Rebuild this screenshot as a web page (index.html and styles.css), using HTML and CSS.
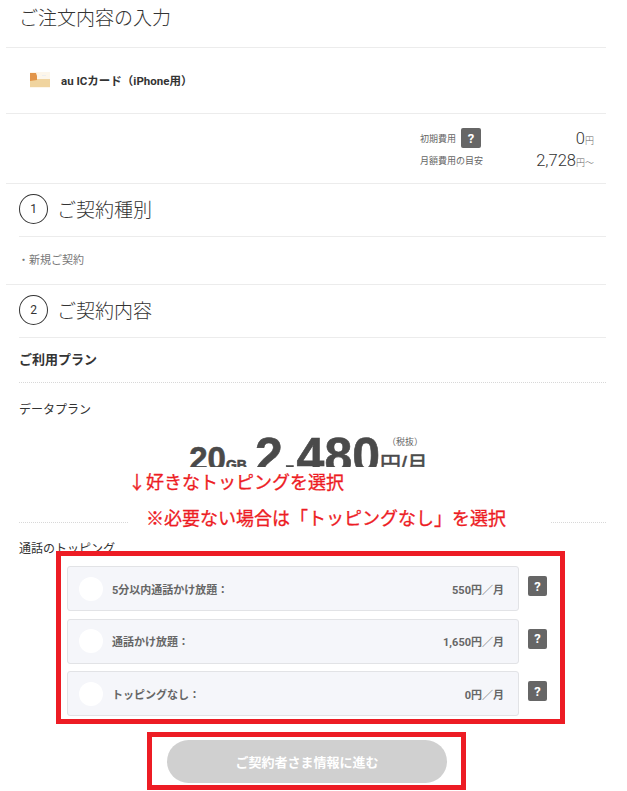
FILE: index.html
```html
<!DOCTYPE html>
<html lang="ja">
<head>
  <meta charset="UTF-8">
  <meta name="viewport" content="width=device-width, initial-scale=1.0">
  <title>ご注文内容の入力</title>
  <link rel="stylesheet" href="styles.css">
</head>
<body>
  <div class="page">
    <h1 class="page-title">ご注文内容の入力</h1>

    <div class="product">
      <svg class="product-icon" width="20" height="16" viewBox="0 0 20 16">
        <rect x="0" y="0" width="20" height="16" fill="#fdf6ea"/>
        <rect x="0" y="7" width="20" height="8" fill="#f0d49f"/>
        <path d="M0 1h6l1 3v4l-7 1z" fill="#e2954a"/>
        <rect x="12" y="3" width="4" height="1" fill="#eeeeee"/>
      </svg>
      <span class="product-name">au ICカード（iPhone用）</span>
    </div>

    <div class="fees">
      <div class="fee-row">
        <span class="fee-label">初期費用</span>
        <span class="help help-fee">?</span>
        <span class="fee-price">0<small>円</small></span>
      </div>
      <div class="fee-row">
        <span class="fee-label">月額費用の目安</span>
        <span class="fee-price">2,728<small>円～</small></span>
      </div>
    </div>

    <div class="step">
      <span class="step-num">1</span>
      <h2 class="step-title">ご契約種別</h2>
    </div>
    <p class="contract-type">・新規ご契約</p>

    <div class="step step-second">
      <span class="step-num">2</span>
      <h2 class="step-title">ご契約内容</h2>
    </div>
    <h3 class="plan-head">ご利用プラン</h3>

    <div class="data-plan">
      <p class="field-label">データプラン</p>
      <div class="plan-price">
        <span class="plan-gb">20<small>GB</small></span>
        <span class="plan-yen">2,480</span>
        <span class="plan-unit"><em>（税抜）</em>円/月</span>
      </div>
    </div>

    <div class="topping">
      <p class="field-label">通話のトッピング</p>
      <div class="option-list">
        <div class="option-row">
          <div class="option">
            <span class="radio"></span>
            <span class="option-name">5分以内通話かけ放題：</span>
            <span class="option-price">550円／月</span>
          </div>
          <span class="help">?</span>
        </div>
        <div class="option-row">
          <div class="option">
            <span class="radio"></span>
            <span class="option-name">通話かけ放題：</span>
            <span class="option-price">1,650円／月</span>
          </div>
          <span class="help">?</span>
        </div>
        <div class="option-row">
          <div class="option">
            <span class="radio"></span>
            <span class="option-name">トッピングなし：</span>
            <span class="option-price">0円／月</span>
          </div>
          <span class="help">?</span>
        </div>
      </div>
    </div>

    <div class="next-wrap">
      <button class="next-btn">ご契約者さま情報に進む</button>
    </div>

    <!-- annotations drawn on top of the screenshot -->
    <div class="note">
      <p class="note-first">↓好きなトッピングを選択</p>
      <p class="note-second">※必要ない場合は「トッピングなし」を選択</p>
    </div>
    <div class="red-box red-options"></div>
    <div class="red-box red-button"></div>
  </div>
</body>
</html>
```

FILE: styles.css
```css
* {
  box-sizing: border-box;
}
html, body {
  height: 791px;
  overflow: hidden;
}
body {
  margin: 0;
  background: #fff;
  color: #333;
  font-family: 'Roboto', 'Noto Sans CJK JP', sans-serif;
}
h1, h2, h3, p {
  margin: 0;
  font-weight: normal;
}
.page {
  position: relative;
  width: 600px;
  height: 791px;
  margin-left: 6px;
}
.page-title {
  height: 48px;
  padding: 5px 0 0 13px;
  font-size: 19px;
  line-height: 28px;
  font-weight: 300;
  border-bottom: 1px solid #ececec;
}
.product {
  display: flex;
  align-items: center;
  height: 66px;
  padding: 0 0 2px 24px;
  border-bottom: 1px solid #ececec;
}
.product-icon {
  margin-right: 11px;
  filter: blur(0.4px);
}
.product-name {
  font-size: 11.5px;
  font-weight: 700;
}
.fees {
  display: flex;
  flex-direction: column;
  gap: 2px;
  height: 70px;
  padding: 14px 12px 0 414px;
  border-bottom: 1px solid #ececec;
}
.fee-row {
  display: flex;
  align-items: center;
  height: 20px;
}
.fee-label {
  font-size: 9px;
  color: #666;
}
.fee-price {
  margin-left: auto;
  font-size: 16.5px;
  font-weight: 300;
}
.fee-price small {
  font-size: 9px;
  color: #666;
}
.help {
  display: flex;
  flex: none;
  align-items: center;
  justify-content: center;
  width: 19px;
  height: 20px;
  border-radius: 2px;
  background: #666;
  color: #fff;
  font-size: 13px;
  font-weight: 700;
}
.help-fee {
  width: 20px;
  margin-left: 5px;
}
.step {
  display: flex;
  align-items: center;
  gap: 9px;
  height: 53px;
  margin-left: 13px;
  padding-bottom: 3px;
  border-bottom: 1px solid #ececec;
}
.step-num {
  display: flex;
  align-items: center;
  justify-content: center;
  width: 29px;
  height: 30px;
  border: 1px solid #333;
  border-radius: 50%;
  font-size: 12px;
}
.step-title {
  font-size: 19px;
  font-weight: 300;
}
.contract-type {
  height: 48px;
  padding: 16px 0 0 12px;
  font-size: 11px;
  line-height: 16px;
  color: #777;
  border-bottom: 1px solid #ececec;
}
.plan-head {
  height: 45px;
  margin-left: 13px;
  padding-top: 13px;
  font-size: 13px;
  line-height: 18px;
  font-weight: 700;
  border-bottom: 1px dotted #d8d8d8;
}
.data-plan {
  height: 140px;
  margin-left: 13px;
  padding-top: 18px;
  border-bottom: 1px dotted #d8d8d8;
  overflow: hidden;
}
.field-label {
  font-size: 12px;
  line-height: 18px;
}
.plan-price {
  display: flex;
  align-items: flex-end;
  justify-content: center;
  height: 46px;
  margin-top: 14px;
  padding-right: 8px;
  color: #4a4a4a;
  font-weight: 700;
  font-family: 'Liberation Sans', 'Noto Sans CJK JP', sans-serif;
  -webkit-text-stroke: 0.6px #4a4a4a;
}
.plan-gb {
  font-size: 33px;
  line-height: 28px;
  margin-right: 8px;
}
.plan-gb small {
  font-size: 14px;
}
.plan-yen {
  font-size: 50px;
  line-height: 46px;
}
.plan-unit {
  position: relative;
  font-size: 21px;
  line-height: 30px;
  font-weight: 400;
}
.plan-unit em {
  position: absolute;
  left: 7px;
  top: -13px;
  font-size: 9px;
  line-height: 12px;
  font-style: normal;
  font-weight: 400;
  white-space: nowrap;
  color: #666;
  -webkit-text-stroke: 0;
}
.topping {
  margin-left: 13px;
  padding-top: 17px;
}
.option-list {
  display: flex;
  flex-direction: column;
  gap: 7.5px;
  margin: 8px 0 0 48px;
}
.option-row {
  display: flex;
  align-items: flex-start;
  gap: 9px;
}
.option {
  display: flex;
  align-items: center;
  width: 452px;
  height: 45px;
  padding: 0 14px 0 11px;
  background: #f5f6fa;
  border: 1px solid #e2e3e6;
  border-radius: 3px;
  color: #666;
  font-size: 11px;
  font-weight: 700;
}
.radio {
  width: 24px;
  height: 24px;
  margin-right: 9px;
  border-radius: 50%;
  background: #fff;
}
.option-price {
  margin-left: auto;
}
.option-row .help {
  margin-top: 10px;
}
.next-wrap {
  display: flex;
  justify-content: center;
  margin-top: 24px;
  padding-left: 2px;
}
.next-btn {
  width: 280px;
  height: 43px;
  border: 0;
  border-radius: 22px;
  background: #d0d0d0;
  color: #fff;
  font-family: inherit;
  font-size: 13px;
  font-weight: 700;
}
.note {
  position: absolute;
  left: 122px;
  top: 467px;
  width: 422px;
  height: 63px;
  background: #fff;
  color: #ed1c24;
  font-weight: 700;
  font-size: 18px;
  line-height: 26px;
  -webkit-text-stroke: 0.3px #ed1c24;
}
.note-first {
  padding: 3px 0 0;
}
.note-second {
  padding: 10px 0 0 18px;
  white-space: nowrap;
}
.red-box {
  position: absolute;
  border: 5px solid #ed1c24;
}
.red-options {
  left: 50px;
  top: 551px;
  width: 509px;
  height: 173px;
}
.red-button {
  left: 141px;
  top: 732px;
  width: 319px;
  height: 58px;
}
```
